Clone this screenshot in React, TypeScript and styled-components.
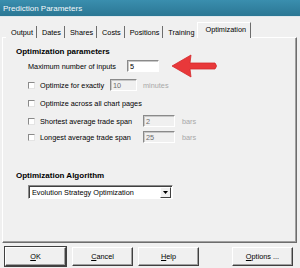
import React from "react";
import styled, { createGlobalStyle } from "styled-components";

const Global = createGlobalStyle`
  html, body { margin: 0; padding: 0; background: #f0f0f0; }
  body { font-family: "Liberation Sans", Arial, sans-serif; font-size: 7.3px; color: #000; }
`;

const Window = styled.div`
  position: relative;
  width: 300px;
  height: 268px;
  overflow: hidden;
  background: #f0f0f0;
  display: flex;
  flex-direction: column;
`;

const TitleBar = styled.div`
  height: 17px;
  flex: none;
  display: flex;
  align-items: center;
  padding-left: 3px;
  background: linear-gradient(#3a8eae, #2b7794);
  color: #f4f8fa;
  font-size: 8px;
  border-bottom: 1px solid #dfe8ec;
  box-sizing: border-box;
`;

const Body = styled.div`
  display: flex;
  flex-direction: column;
  padding: 6px 3px 0 2px;
`;

const TabStrip = styled.div`
  height: 15px;
  display: flex;
  align-items: flex-end;
  position: relative;
  z-index: 1;
  margin-bottom: -1px;
`;

const Tab = styled.div<{ $active?: boolean; $first?: boolean }>`
  box-sizing: border-box;
  display: flex;
  align-items: center;
  height: ${(p) => (p.$active ? 16 : 12)}px;
  padding: ${(p) => (p.$active ? "0 4px 2px 7px" : "0 3px 0 5px")};
  margin-left: ${(p) => (p.$first ? 4 : p.$active ? -1 : 0)}px;
  border-right: 1px solid #6d6d6d;
  border-left: ${(p) => (p.$active ? "1px solid #ffffff" : "none")};
  border-top: ${(p) => (p.$active ? "1px solid #ffffff" : "none")};
  background: #f0f0f0;
  white-space: nowrap;
`;

const Panel = styled.div`
  box-sizing: border-box;
  height: 206px;
  border-top: 1px solid #ffffff;
  border-left: 1px solid #ffffff;
  border-right: 1px solid #6d6d6d;
  border-bottom: 1px solid #6d6d6d;
  box-shadow: inset -1px -1px 0 #a0a0a0;
  padding: 9px 0 0 13px;
  display: flex;
  flex-direction: column;
`;

const Heading = styled.div<{ $mt?: number }>`
  font-weight: bold;
  font-size: 8px;
  line-height: 10px;
  height: 10px;
  margin-top: ${(p) => p.$mt ?? 0}px;
`;

const Row = styled.div<{ $mt: number }>`
  display: flex;
  align-items: center;
  height: 12px;
  margin-top: ${(p) => p.$mt}px;
  padding-left: 12px;
`;

const Label = styled.span<{ $w: number }>`
  width: ${(p) => p.$w}px;
  flex: none;
  white-space: nowrap;
`;

const Check = styled.span`
  box-sizing: border-box;
  width: 7px;
  height: 7px;
  flex: none;
  margin-right: 5px;
  background: #ffffff;
  border-top: 1px solid #8a8a8a;
  border-left: 1px solid #8a8a8a;
  border-right: 1px solid #e4e4e4;
  border-bottom: 1px solid #e4e4e4;
`;

const Field = styled.div<{ $w: number; $disabled?: boolean }>`
  box-sizing: border-box;
  width: ${(p) => p.$w}px;
  height: 12px;
  flex: none;
  display: flex;
  align-items: center;
  padding-left: 2px;
  background: ${(p) => (p.$disabled ? "#f0f0f0" : "#ffffff")};
  color: ${(p) => (p.$disabled ? "#6d6d6d" : "#000")};
  border-top: 1px solid #8a8a8a;
  border-left: 1px solid #8a8a8a;
  border-right: 1px solid #ffffff;
  border-bottom: 1px solid #ffffff;
  box-shadow: inset 1px 1px 0 #c8c8c8;
`;

const Unit = styled.span<{ $ml: number }>`
  margin-left: ${(p) => p.$ml}px;
  color: #a8a8a8;
`;

const Select = styled.div`
  box-sizing: border-box;
  width: 145px;
  height: 14px;
  margin: 4px 0 0 12px;
  display: flex;
  align-items: center;
  background: #ffffff;
  border-top: 1px solid #8a8a8a;
  border-left: 1px solid #8a8a8a;
  border-right: 1px solid #ffffff;
  border-bottom: 1px solid #ffffff;
  box-shadow: inset 1px 1px 0 #404040;
  padding: 1px 1px 1px 3px;
`;

const SelectText = styled.span`
  flex: 1;
`;

const SelectButton = styled.div`
  box-sizing: border-box;
  width: 11px;
  height: 11px;
  display: flex;
  align-items: center;
  justify-content: center;
  background: #f0f0f0;
  border-top: 1px solid #ffffff;
  border-left: 1px solid #ffffff;
  border-right: 1px solid #404040;
  border-bottom: 1px solid #404040;
`;

const ButtonRow = styled.div`
  display: flex;
  margin-top: 4px;
  padding-left: 3px;
`;

const Button = styled.div<{ $ml: number; $default?: boolean }>`
  box-sizing: border-box;
  width: ${(p) => (p.$default ? 61 : 61)}px;
  height: 19px;
  margin-left: ${(p) => p.$ml}px;
  display: flex;
  align-items: center;
  justify-content: center;
  background: #f0f0f0;
  border-top: 1px solid #ffffff;
  border-left: 1px solid #ffffff;
  border-right: 1px solid #404040;
  border-bottom: 1px solid #404040;
  box-shadow: ${(p) =>
    p.$default
      ? "0 0 0 1px #404040, inset -1px -1px 0 #a0a0a0"
      : "inset -1px -1px 0 #a0a0a0"};
`;

const U = styled.span`
  text-decoration: underline;
`;

const ArrowMark = styled.svg`
  position: absolute;
  left: 170px;
  top: 53px;
`;

export default function App() {
  return (
    <Window>
      <Global />
      <TitleBar>Prediction Parameters</TitleBar>
      <Body>
        <TabStrip>
          <Tab $first>Output</Tab>
          <Tab>Dates</Tab>
          <Tab>Shares</Tab>
          <Tab>Costs</Tab>
          <Tab>Positions</Tab>
          <Tab>Training</Tab>
          <Tab $active>Optimization</Tab>
        </TabStrip>
        <Panel>
          <Heading>Optimization parameters</Heading>
          <Row $mt={3}>
            <Label $w={99}>Maximum number of inputs</Label>
            <Field $w={32}>5</Field>
          </Row>
          <Row $mt={7}>
            <Check />
            <Label $w={70}>Optimize for exactly</Label>
            <Field $w={27} $disabled>10</Field>
            <Unit $ml={6}>minutes</Unit>
          </Row>
          <Row $mt={6}>
            <Check />
            <Label $w={120}>Optimize across all chart pages</Label>
          </Row>
          <Row $mt={6}>
            <Check />
            <Label $w={103}>Shortest average trade span</Label>
            <Field $w={32} $disabled>2</Field>
            <Unit $ml={7}>bars</Unit>
          </Row>
          <Row $mt={4}>
            <Check />
            <Label $w={103}>Longest average trade span</Label>
            <Field $w={32} $disabled>25</Field>
            <Unit $ml={7}>bars</Unit>
          </Row>
          <Heading $mt={28}>Optimization Algorithm</Heading>
          <Select>
            <SelectText>Evolution Strategy Optimization</SelectText>
            <SelectButton>
              <svg width="5" height="3" viewBox="0 0 5 3">
                <path d="M0 0H5L2.5 3Z" fill="#000" />
              </svg>
            </SelectButton>
          </Select>
        </Panel>
        <ButtonRow>
          <Button $ml={0} $default>
            <U>O</U>K
          </Button>
          <Button $ml={6}>
            <U>C</U>ancel
          </Button>
          <Button $ml={5}>
            <U>H</U>elp
          </Button>
          <Button $ml={33}>
            <U>O</U>ptions ...
          </Button>
        </ButtonRow>
      </Body>
      <ArrowMark width="50" height="26" viewBox="0 0 50 26">
        <path
          d="M2 13 L21 2 L20 10 L45 10 Q48 13 45 16 L20 16 L21 24 Z"
          fill="#e8383a"
          stroke="#d42a2c"
          strokeWidth="0.8"
          strokeLinejoin="round"
        />
      </ArrowMark>
    </Window>
  );
}
